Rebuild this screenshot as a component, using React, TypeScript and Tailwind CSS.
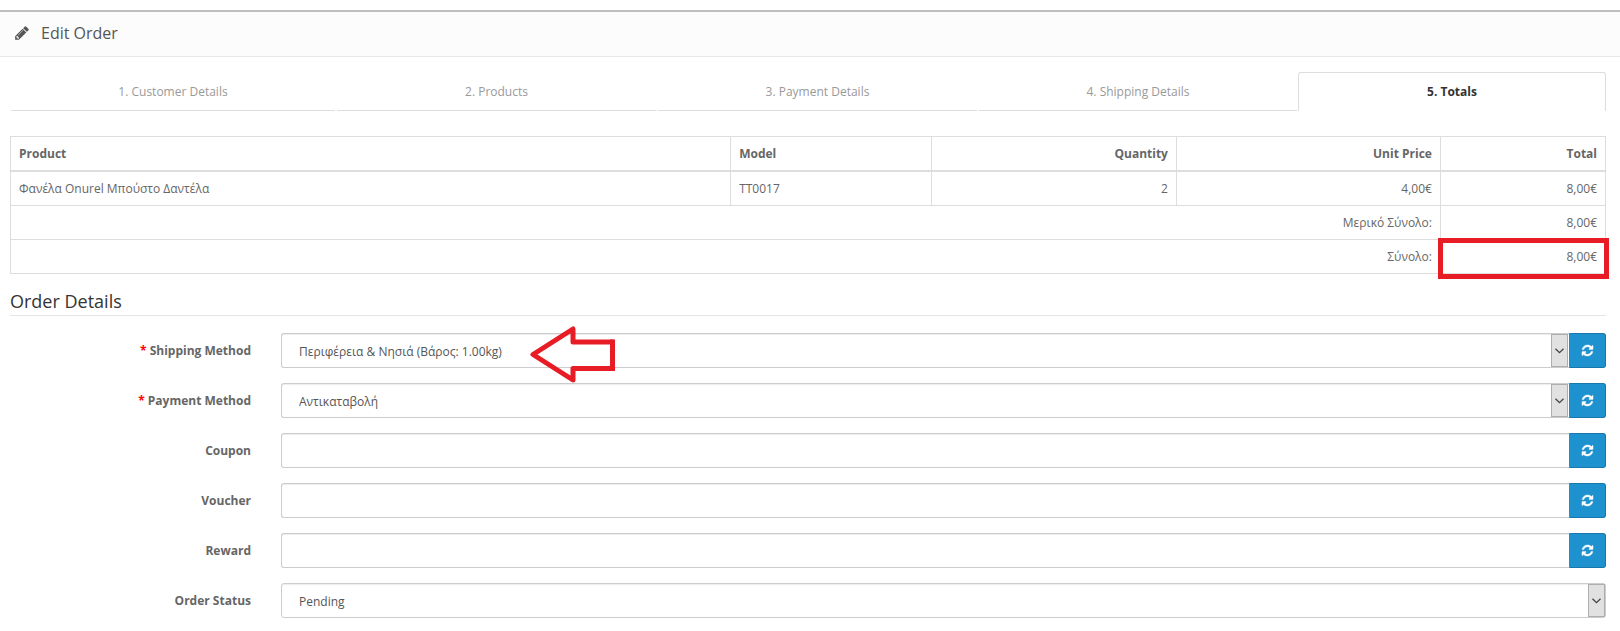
import type { ReactNode } from "react";

const tabs = ["1. Customer Details", "2. Products", "3. Payment Details", "4. Shipping Details", "5. Totals"];

function PencilIcon() {
  return (
    <svg viewBox="0 0 1792 1792" className="size-4 fill-current" aria-hidden="true">
      <path d="M491 1536l91-91-235-235-91 91v107h128v128h107zm523-928q0-22-22-22-10 0-17 7l-542 542q-7 7-7 17 0 22 22 22 10 0 17-7l542-542q7-7 7-17zm-54-192l416 416-832 832h-416v-416zm683 96q0 53-37 90l-166 166-416-416 166-165q36-38 90-38 53 0 91 38l235 234q37 39 37 91z" />
    </svg>
  );
}

function RefreshIcon() {
  return (
    <svg viewBox="0 0 1792 1792" className="size-[13px] fill-current stroke-current" strokeWidth="50" aria-hidden="true">
      <path d="M1639 1056q0 5-1 7-64 268-268 434.5t-478 166.5q-146 0-282.5-55t-243.5-157l-129 129q-19 19-45 19t-45-19-19-45v-448q0-26 19-45t45-19h448q26 0 45 19t19 45-19 45l-137 137q71 66 161 102t187 36q134 0 250-65t186-179q11-17 53-117 8-23 30-23h192q13 0 22.5 9.5t9.5 22.5zm25-800v448q0 26-19 45t-45 19h-448q-26 0-45-19t-19-45 19-45l138-138q-148-137-349-137-134 0-250 65t-186 179q-11 17-53 117-8 23-30 23h-199q-13 0-22.5-9.5t-9.5-22.5v-7q65-268 270-434.5t480-166.5q146 0 284 55.5t245 156.5l130-129q19-19 45-19t45 19 19 45z" />
    </svg>
  );
}

function ArrowMark() {
  return (
    <svg
      viewBox="0 0 86 58"
      className="pointer-events-none absolute -top-2 left-[249px] z-10 h-[58px] w-[86px] fill-none stroke-[#e81c24]"
      strokeWidth="5"
      strokeLinejoin="round"
      aria-hidden="true"
    >
      <path d="M3 29.500L43 4V17H82.500V43.500H43V55Z" />
      <path d="M82.500 17V43.500" strokeLinecap="square" />
    </svg>
  );
}

function Row({ id, label, required, children }: { id: string; label: string; required?: boolean; children: ReactNode }) {
  return (
    <div className="mb-[15px] grid grid-cols-[241fr_1325fr] gap-[30px]">
      <label htmlFor={id} className="pt-[9px] text-right font-bold leading-[18px]">
        {required && <span className="text-[#f00]">* </span>}
        {label}
      </label>
      <div className="relative flex">{children}</div>
    </div>
  );
}

const field = "h-[35px] w-full rounded-[3px] border border-[#ccc] bg-white text-[#555] shadow-[inset_0_1px_1px_rgba(0,0,0,0.075)] outline-none";

function SelectField({ id, value, grouped }: { id: string; value: string; grouped?: boolean }) {
  return (
    <div className="relative min-w-0 flex-1">
      <select id={id} className={`${field} appearance-none pl-[17px] pr-6 pt-[2px] ${grouped ? "rounded-r-none border-r-0" : ""}`}>
        <option>{value}</option>
      </select>
      <span className="pointer-events-none absolute inset-y-px right-px flex w-[17px] items-center justify-center border border-[#adadad] bg-[#e1e1e1]">
        <svg viewBox="0 0 9 6" className="h-[6px] w-[9px] fill-none stroke-[#444]" strokeWidth="1.300" aria-hidden="true">
          <path d="M.5 .7L4.500 4.700L8.500 .7" />
        </svg>
      </span>
    </div>
  );
}

function ApplyButton({ label }: { label: string }) {
  return (
    <button
      type="button"
      aria-label={label}
      className="flex h-[35px] w-[37px] shrink-0 items-center justify-center rounded-r-[3px] border border-[#1978ab] border-l-[#1e91cf] bg-[#1e91cf] pr-px text-white"
    >
      <RefreshIcon />
    </button>
  );
}

export default function App() {
  const cell = "border border-[#ddd] px-2 py-2";
  return (
    <div className="bg-white pt-[10px] font-['Open_Sans','Noto_Sans',sans-serif] text-xs leading-[17px] text-[#666]">
      <header className="flex items-center gap-[11px] border-b border-t-2 border-b-[#e8e8e8] border-t-[#bfbfbf] bg-[#fcfcfc] px-[14px] pb-[11px] pt-[9px] text-[#555]">
        <PencilIcon />
        <h1 className="text-base leading-6 text-[#555]">Edit Order</h1>
      </header>

      <main className="pb-3 pl-[10px] pr-[14px] pt-[15px]">
        <nav className="grid grid-cols-[326fr_321fr_321fr_320fr_308fr]">
          {tabs.map((tab, i) => (
            <a
              key={tab}
              href="#"
              aria-current={i === 4 ? "page" : undefined}
              className={
                i === 4
                  ? "rounded-t-[3px] border border-b-0 border-[#ddd] pb-[11px] pt-[10px] text-center font-bold text-[#333]"
                  : "rounded-[2px] border border-transparent border-b-[#ddd] py-[10px] text-center text-[#999]"
              }
            >
              {tab}
            </a>
          ))}
        </nav>

        <table className="mt-[25px] w-full table-fixed border-collapse border border-[#ddd]">
          <colgroup>
            <col className="w-[45.150%]" />
            <col className="w-[12.600%]" />
            <col className="w-[15.350%]" />
            <col className="w-[16.550%]" />
            <col />
          </colgroup>
          <thead>
            <tr className="text-left">
              <th className={`${cell} border-b-2`}>Product</th>
              <th className={`${cell} border-b-2`}>Model</th>
              <th className={`${cell} border-b-2 text-right`}>Quantity</th>
              <th className={`${cell} border-b-2 text-right`}>Unit Price</th>
              <th className={`${cell} border-b-2 text-right`}>Total</th>
            </tr>
          </thead>
          <tbody>
            <tr>
              <td className={cell}>Φανέλα Onurel Μπούστο Δαντέλα</td>
              <td className={cell}>TT0017</td>
              <td className={`${cell} text-right`}>2</td>
              <td className={`${cell} text-right`}>4,00€</td>
              <td className={`${cell} text-right`}>8,00€</td>
            </tr>
            <tr>
              <td colSpan={4} className={`${cell} text-right`}>Μερικό Σύνολο:</td>
              <td className={`${cell} text-right`}>8,00€</td>
            </tr>
            <tr>
              <td colSpan={4} className={`${cell} text-right`}>Σύνολο:</td>
              <td className={`${cell} relative text-right`}>
                8,00€
                <span className="pointer-events-none absolute -bottom-[6px] -left-[3px] -right-[4px] -top-[2px] border-[5px] border-[#e81c24]" />
              </td>
            </tr>
          </tbody>
        </table>

        <form>
          <h2 className="mb-[17px] mt-[14px] border-b border-[#e5e5e5] text-lg leading-[27px] text-[#333]">Order Details</h2>
          <Row id="shipping" label="Shipping Method" required>
            <SelectField id="shipping" value="Περιφέρεια & Νησιά (Βάρος: 1.00kg)" grouped />
            <ApplyButton label="Apply shipping method" />
            <ArrowMark />
          </Row>
          <Row id="payment" label="Payment Method" required>
            <SelectField id="payment" value="Αντικαταβολή" grouped />
            <ApplyButton label="Apply payment method" />
          </Row>
          {["Coupon", "Voucher", "Reward"].map((name) => (
            <Row key={name} id={name} label={name}>
              <input id={name} type="text" className={`${field} min-w-0 flex-1 rounded-r-none border-r-0 px-3`} />
              <ApplyButton label={`Apply ${name}`} />
            </Row>
          ))}
          <Row id="status" label="Order Status">
            <SelectField id="status" value="Pending" />
          </Row>
        </form>
      </main>
    </div>
  );
}
